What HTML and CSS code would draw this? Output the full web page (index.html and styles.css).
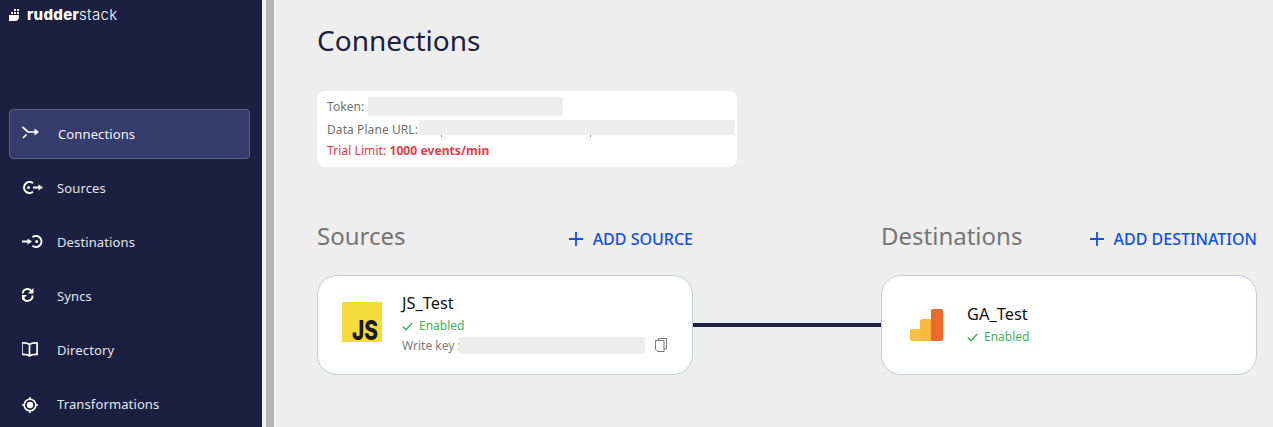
FILE: index.html
```html
<!DOCTYPE html>
<html lang="en">
<head>
<meta charset="utf-8">
<title>Connections</title>
<link rel="stylesheet" href="styles.css">
</head>
<body>
<div class="app">
  <aside class="sidebar">
    <div class="logo">
      <svg class="logo-mark" width="10" height="12" viewBox="0 0 10 12"><path fill="#fff" d="M5 0h2v2H5zM8 0h2v2H8zM2 3h2v2H2zM5 3h2v2H5zM8 3h2v2H8zM0 6h10v2c0 2.500-2 4-4 4H0z"/></svg>
      <span class="logo-text"><b>rudder</b>stack</span>
    </div>
    <nav class="nav">
      <a class="nav-item active">
        <svg class="nav-icon" width="18" height="18" viewBox="0 0 18 18"><path fill="none" stroke="#fff" stroke-width="1.700" d="M.5 2 6 7h8M1 13l3.500-3.500"/><path fill="#fff" d="M12.500 3.500 17 7l-4.500 3.500z"/></svg>
        <span>Connections</span>
      </a>
      <a class="nav-item">
        <svg class="nav-icon" width="22" height="18" viewBox="0 0 22 18"><path fill="none" stroke="#fff" stroke-width="2" d="M11 4.200A5.500 5.500 0 1 0 11 12.800"/><circle cx="6.500" cy="8.500" r="1.500" fill="#fff"/><path fill="none" stroke="#fff" stroke-width="2" d="M11 8.500h6"/><path fill="#fff" d="M16.500 5.500 21 8.500l-4.500 3z"/></svg>
        <span>Sources</span>
      </a>
      <a class="nav-item">
        <svg class="nav-icon" width="22" height="18" viewBox="0 0 22 18"><path fill="none" stroke="#fff" stroke-width="2" d="M10.500 4.200A5.500 5.500 0 1 1 10.500 12.800"/><circle cx="14.700" cy="8.500" r="1.500" fill="#fff"/><path fill="none" stroke="#fff" stroke-width="2" d="M0 8.500h6"/><path fill="#fff" d="M5.500 5.500 10 8.500l-4.500 3z"/></svg>
        <span>Destinations</span>
      </a>
      <a class="nav-item">
        <svg class="nav-icon" width="18" height="18" viewBox="2 0 18 18"><path fill="none" stroke="#fff" stroke-width="1.900" d="M2.500 6.500A5 5 0 0 1 11.500 4M12.500 8.500A5 5 0 0 1 3 11"/><path fill="#fff" d="M13.500 1v5.500H8zM1.500 13.500V8H7z"/></svg>
        <span>Syncs</span>
      </a>
      <a class="nav-item">
        <svg class="nav-icon" width="18" height="18" viewBox="1 0 18 18"><path fill="none" stroke="#fff" stroke-width="1.700" d="M8.500 3.500C6.500 2 3.500 1.800.9 2v11.500c2.600-.2 5.600 0 7.600 1.500 2-1.500 5-1.700 7.600-1.500V2c-2.600-.2-5.600 0-7.600 1.500zm0 0V15"/></svg>
        <span>Directory</span>
      </a>
      <a class="nav-item">
        <svg class="nav-icon" width="18" height="18" viewBox="0 -2 18 18"><circle cx="8" cy="8" r="5.800" fill="none" stroke="#fff" stroke-width="1.600"/><circle cx="8" cy="8" r="3.200" fill="#fff"/><path stroke="#fff" stroke-width="1.500" d="M8 0v2.500M8 13.500V16M0 8h2.500M13.500 8H16"/></svg>
        <span>Transformations</span>
      </a>
    </nav>
  </aside>
  <div class="divider"></div>
  <main class="main">
    <h1 class="title">Connections</h1>
    <section class="info">
      <div class="info-row"><span>Token:</span><span class="mask mask-token"></span></div>
      <div class="info-row url-row"><span>Data Plane URL:</span><span class="mask mask-url"></span></div>
      <div class="info-row trial">Trial Limit:&nbsp;<b>1000 events/min</b></div>
    </section>
    <div class="columns">
      <section class="column">
        <header class="column-head">
          <h2>Sources</h2>
          <a class="add">
            <svg width="14" height="14" viewBox="0 0 14 14"><path stroke="#0f4fef" stroke-width="1.800" d="M7 0v14M0 7h14"/></svg>
            <span>ADD SOURCE</span>
          </a>
        </header>
        <article class="card">
          <svg class="js-logo" width="40" height="40" viewBox="0 0 40 40"><rect width="40" height="40" fill="#f4dc3c"/><text x="10" y="38" textLength="26" lengthAdjust="spacingAndGlyphs" class="js-text">JS</text></svg>
          <div class="card-body">
            <div class="card-name">JS_Test</div>
            <div class="status">
              <svg width="11" height="9" viewBox="0 0 11 9"><path fill="none" stroke="#3aaa5e" stroke-width="1.300" d="M.8 4.500 4 7.700 10.200 1"/></svg>
              <span>Enabled</span>
            </div>
            <div class="key-row">
              <span class="key-label">Write key :</span>
              <span class="mask mask-key"></span>
              <svg class="copy" width="12" height="14" viewBox="0 0 12 14"><path fill="none" stroke="#777" d="M3.500 2.500V.5h8v10.500H9"/><path fill="#fff" stroke="#777" d="M.5 2.500h8.500v11H3L.5 11.500z"/></svg>
            </div>
          </div>
        </article>
      </section>
      <div class="link-col"><div class="link"></div></div>
      <section class="column">
        <header class="column-head">
          <h2>Destinations</h2>
          <a class="add">
            <svg width="14" height="14" viewBox="0 0 14 14"><path stroke="#0f4fef" stroke-width="1.800" d="M7 0v14M0 7h14"/></svg>
            <span>ADD DESTINATION</span>
          </a>
        </header>
        <article class="card card-dest">
          <svg class="ga-logo" width="33" height="32" viewBox="0 0 33 32"><rect x="0" y="20" width="12" height="12" rx="2" fill="#f9c13c"/><rect x="10" y="10" width="13" height="22" rx="2" fill="#f9b93a"/><rect x="21" y="0" width="12" height="32" rx="2" fill="#ee6a2b"/></svg>
          <div class="card-body">
            <div class="card-name">GA_Test</div>
            <div class="status">
              <svg width="11" height="9" viewBox="0 0 11 9"><path fill="none" stroke="#3aaa5e" stroke-width="1.300" d="M.8 4.500 4 7.700 10.200 1"/></svg>
              <span>Enabled</span>
            </div>
          </div>
        </article>
      </section>
    </div>
  </main>
</div>
</body>
</html>
```
FILE: styles.css
```css
* { box-sizing: border-box; }
html, body { margin: 0; height: 100%; overflow: hidden; }
body { font-family: "Noto Sans", sans-serif; background: #eeeeee; }
h1, h2 { margin: 0; font-weight: 400; }

.app { display: flex; height: 427px; overflow: hidden; }

.sidebar { flex: 0 0 262px; background: #1b2040; padding: 0 12px 0 9px; }
.logo { height: 109px; display: flex; align-items: flex-start; gap: 8px; padding-top: 4px; }
.logo-mark { margin-top: 5px; }
.logo-text { font-family: "Inter", sans-serif; font-size: 15px; line-height: 22px; color: #fff; font-weight: 300; letter-spacing: .3px; }
.logo-text b { font-weight: 800; }

.nav { display: flex; flex-direction: column; gap: 4px; }
.nav-item { position: relative; height: 50px; display: flex; align-items: center; padding-left: 48px; color: #e4e5ec; font-size: 13px; letter-spacing: .12px; border-radius: 4px; flex: none; }
.nav-item.active { background: #353c6b; border: 1px solid #5c628a; color: #f2f2f6; }
.nav-icon { position: absolute; left: 13px; top: 16px; }
.active .nav-icon { left: 12px; top: 15px; }

.divider { flex: 0 0 14px; background: #b5b5b5; border-left: 4px solid #f4f4f4; border-right: 2px solid #f4f4f4; }

.main { flex: 1; padding-left: 41px; min-width: 0; }
.title { font-size: 28px; line-height: 38px; color: #1b2040; margin-top: 21px; }

.info { width: 420px; height: 76px; margin-top: 32px; background: #fff; border-radius: 8px; padding: 4px 2px 0 10px; font-size: 12px; letter-spacing: .08px; color: #6f6f6f; }
.info-row { display: flex; height: 22px; align-items: center; white-space: nowrap; }
.url-row { position: relative; top: 1px; }
.mask { display: block; background: #eeeeee; flex: none; }
.mask-token { width: 195px; height: 19px; margin-left: 4px; }
.mask-url { position: relative; width: 316px; height: 15px; margin-left: 1px; margin-bottom: 3px; }
.mask-url::before, .mask-url::after { content: ""; position: absolute; top: 15px; width: 1px; height: 2px; background: #8a8a8a; }
.mask-url::before { left: 22px; }
.mask-url::after { left: 171px; }
.trial { color: #e63946; }
.trial b { font-weight: 700; }

.columns { display: flex; margin-top: 50px; }
.column { flex: 0 0 376px; }
.link-col { flex: 0 0 188px; padding-top: 106px; }
.link { height: 4px; background: #1b2040; }
.column-head { display: flex; justify-content: space-between; align-items: center; height: 38px; }
.column-head h2 { font-size: 24px; line-height: 38px; color: #757575; }
.add { display: flex; align-items: center; gap: 10px; color: #0f4fef; font-size: 16px; font-weight: 500; margin-top: 6px; }

.card { height: 100px; margin-top: 20px; background: #fff; border: 1px solid #c5ccd8; border-radius: 20px; display: flex; align-items: center; padding-left: 24px; }
.js-logo { flex: none; margin-bottom: 6px; overflow: visible; }
.js-text { font-family: "Inter", sans-serif; font-size: 27px; font-weight: 800; fill: #1a1a1a; }
.card-body { margin-left: 20px; flex: 1; min-width: 0; padding-bottom: 3px; }
.card-name { font-size: 16.4px; line-height: 22px; color: #111; }
.status { display: flex; align-items: center; gap: 6px; font-size: 12px; line-height: 18px; color: #3fae63; margin-top: 3px; }
.key-row { display: flex; align-items: center; font-size: 12px; color: #7a7a7a; height: 20px; }
.key-label { flex: 0 0 57px; min-width: 0; white-space: nowrap; }
.mask-key { width: 186px; height: 17px; }
.copy { margin-left: 10px; }

.card-dest { padding-left: 28px; }
.card-dest .card-body { margin-left: 24px; padding-bottom: 1px; }
```
